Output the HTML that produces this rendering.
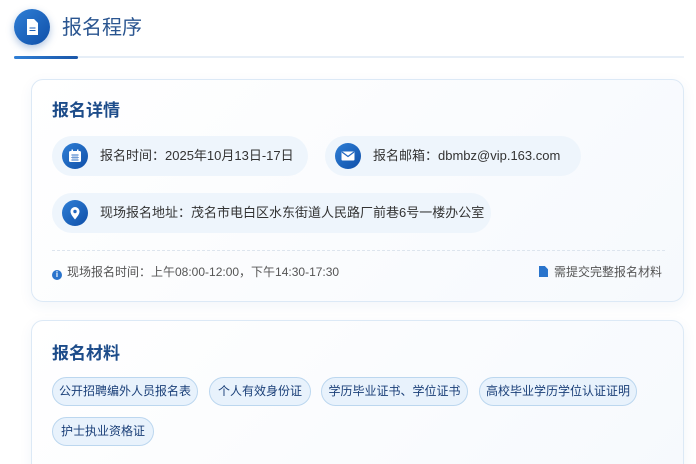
<!DOCTYPE html>
<html><head><meta charset="utf-8"><style>
*{margin:0;padding:0;box-sizing:border-box}
html,body{width:696px;height:464px;overflow:hidden}
body{background:#fff;font-family:"Liberation Sans","Noto Sans CJK SC",sans-serif;position:relative}
.hicon{position:absolute;left:14px;top:9px;width:36px;height:36px;border-radius:50%;background:linear-gradient(135deg,#2f7fd6,#0f4fa8);box-shadow:0 3px 8px rgba(30,90,170,.35)}
.htitle{position:absolute;left:62px;top:14px;font-size:20px;color:#2a5590;line-height:28px}
.line{position:absolute;left:14px;top:56px;width:670px;height:2px;background:#e6eef7}
.line b{position:absolute;left:0;top:0;width:64px;height:3px;background:linear-gradient(90deg,#2f7fd6,#1a56a8);border-radius:2px}
.card{position:absolute;left:31px;width:653px;border:1px solid #dce9f6;border-radius:12px;background:linear-gradient(135deg,#fff,#f6f9fd);box-shadow:0 4px 14px rgba(40,90,160,.06)}
.ct{position:absolute;left:20px;font-size:17px;font-weight:bold;color:#1d4c8a}
.pill{position:absolute;height:40px;border-radius:20px;background:#eef5fc;font-size:13px;color:#333;line-height:40px;padding-left:48px}
.pill i{position:absolute;left:10px;top:7px;width:26px;height:26px;border-radius:50%;background:linear-gradient(135deg,#2f7fd6,#0f4fa8)}
.pill i svg{position:absolute;left:6px;top:6px}
.ft{position:absolute;top:184px;font-size:12px;color:#555;line-height:16px}
.tag{position:absolute;height:29px;border-radius:15px;background:#e8f2fc;border:1px solid #bcd7ef;font-size:12px;color:#1a3f78;line-height:27px;text-align:center}
</style></head><body>
<div class="hicon"><svg width="36" height="36" viewBox="0 0 36 36"><path d="M13 10h7l4 4v12h-11z" fill="#fff"/><path d="M15.5 19h6M15.5 21.5h6" stroke="#1f62b8" stroke-width="1"/></svg></div>
<div class="htitle">报名程序</div>
<div class="line"><b></b></div>

<div class="card" style="top:79px;height:223px">
 <div class="ct" style="top:16px">报名详情</div>
 <div class="pill" style="left:20px;top:56px;width:256px"><i><svg width="14" height="14" viewBox="0 0 14 14"><rect x="1" y="2" width="12" height="11" rx="1.5" fill="#fff"/><rect x="3.5" y="0.5" width="1.5" height="3" fill="#fff"/><rect x="9" y="0.5" width="1.5" height="3" fill="#fff"/><path d="M3 6h8M3 8.5h8M3 11h8M5 5v7M7 5v7M9 5v7" stroke="#2468c0" stroke-width=".6"/></svg></i>报名时间：2025年10月13日-17日</div>
 <div class="pill" style="left:293px;top:56px;width:256px"><i><svg width="14" height="14" viewBox="0 0 14 14"><rect x="0.5" y="2.5" width="13" height="9" rx="1" fill="#fff"/><path d="M1 3l6 4.5 6-4.5" stroke="#2468c0" stroke-width="1.2" fill="none"/></svg></i>报名邮箱：dbmbz@vip.163.com</div>
 <div class="pill" style="left:20px;top:113px;width:439px"><i><svg width="14" height="14" viewBox="0 0 14 14"><path d="M7 13.5C4 10 2.5 7.5 2.5 5.5a4.5 4.5 0 0 1 9 0c0 2-1.5 4.5-4.5 8z" fill="#fff"/><circle cx="7" cy="5.5" r="1.7" fill="#2468c0"/></svg></i>现场报名地址：茂名市电白区水东街道人民路厂前巷6号一楼办公室</div>
 <div style="position:absolute;left:20px;top:170px;width:613px;border-top:1px dashed #dde5ee"></div>
 <div class="ft" style="left:20px"><span style="display:inline-block;width:10px;height:10px;border-radius:50%;background:#2a74cc;color:#fff;font-size:8px;line-height:10px;text-align:center;vertical-align:-1px;margin-right:5px;font-weight:bold">i</span>现场报名时间：上午08:00-12:00，下午14:30-17:30</div>
 <div class="ft" style="right:21px"><span style="display:inline-block;width:9px;height:11px;background:#2a74cc;vertical-align:-1px;margin-right:6px;clip-path:polygon(0 0,65% 0,100% 30%,100% 100%,0 100%)"></span>需提交完整报名材料</div>
</div>

<div class="card" style="top:320px;height:160px">
 <div class="ct" style="top:18px">报名材料</div>
 <div class="tag" style="left:20px;top:56px;width:146px">公开招聘编外人员报名表</div>
 <div class="tag" style="left:177px;top:56px;width:102px">个人有效身份证</div>
 <div class="tag" style="left:289px;top:56px;width:147px">学历毕业证书、学位证书</div>
 <div class="tag" style="left:447px;top:56px;width:158px">高校毕业学历学位认证证明</div>
 <div class="tag" style="left:20px;top:96px;width:102px">护士执业资格证</div>
</div>
</body></html>
